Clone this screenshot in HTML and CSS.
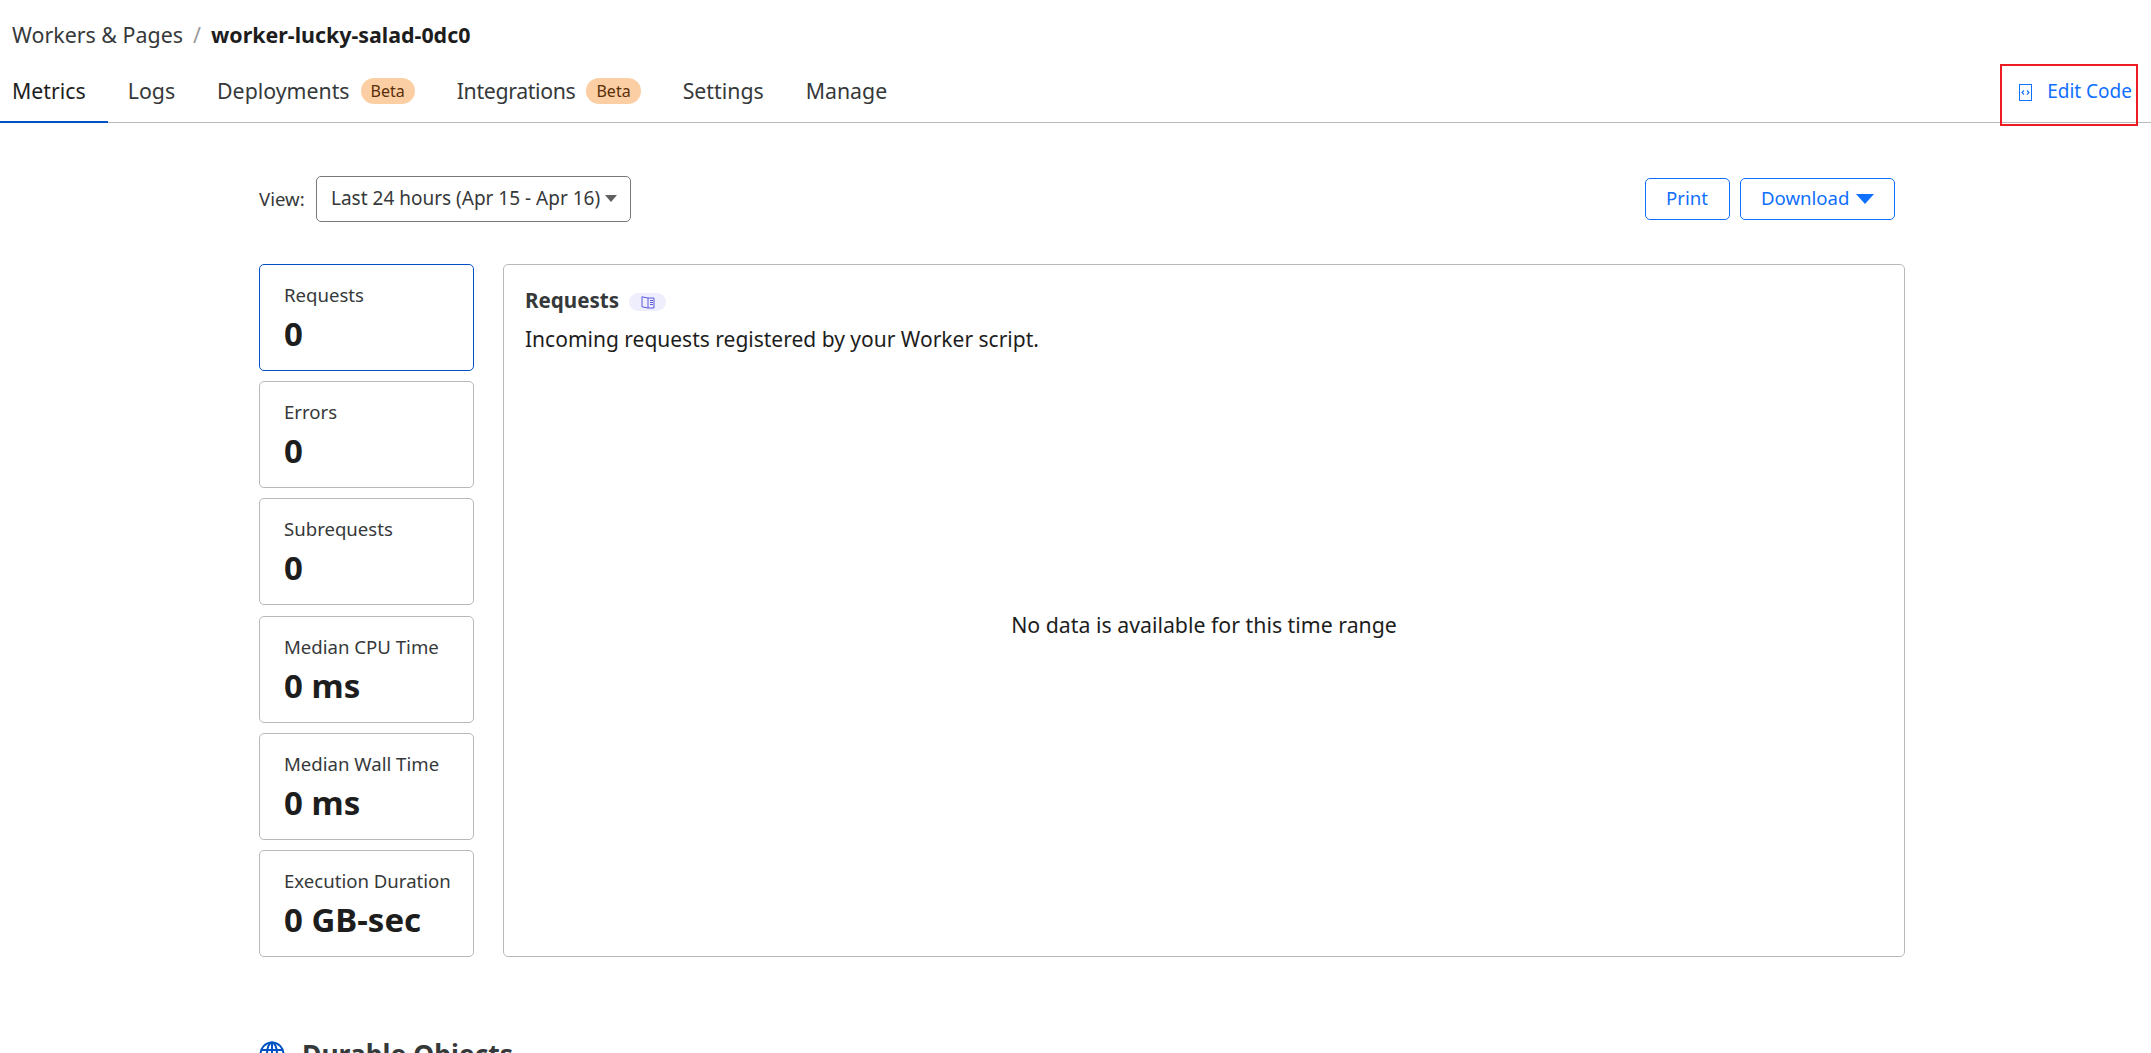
FILE: index.html
```html
<!DOCTYPE html>
<html lang="en">
<head>
<meta charset="utf-8">
<title>worker-lucky-salad-0dc0</title>
<link rel="stylesheet" href="styles.css">
</head>
<body>
<header class="top">
  <nav class="crumbs"><span>Workers &amp; Pages</span><span class="sep">/</span><strong>worker-lucky-salad-0dc0</strong></nav>
  <div class="tabbar">
    <a class="tab active">Metrics</a>
    <a class="tab">Logs</a>
    <a class="tab">Deployments<span class="beta">Beta</span></a>
    <a class="tab tight">Integrations<span class="beta">Beta</span></a>
    <a class="tab">Settings</a>
    <a class="tab">Manage</a>
    <a class="edit">
      <svg class="edit-ico" viewBox="0 0 13 17" width="13" height="17" fill="none" stroke="currentColor"><rect x="0.5" y="0.5" width="12" height="16"/><path d="M5 6.5 3 8.5l2 2M8 6.5l2 2-2 2" stroke-width="1.1"/></svg>
      Edit Code
    </a>
  </div>
</header>
<div class="annot"></div>
<main class="wrap">
  <div class="toolbar">
    <label class="view">View:</label>
    <div class="select">Last 24 hours (Apr 15 - Apr 16)<span class="caret"></span></div>
    <div class="actions">
      <button class="btn">Print</button>
      <button class="btn">Download<span class="caret-blue"></span></button>
    </div>
  </div>
  <div class="grid">
    <div class="cards">
      <div class="card selected"><div class="label">Requests</div><div class="value">0</div></div>
      <div class="card"><div class="label">Errors</div><div class="value">0</div></div>
      <div class="card"><div class="label">Subrequests</div><div class="value">0</div></div>
      <div class="card"><div class="label">Median CPU Time</div><div class="value">0 ms</div></div>
      <div class="card"><div class="label">Median Wall Time</div><div class="value">0 ms</div></div>
      <div class="card"><div class="label">Execution Duration</div><div class="value">0 GB-sec</div></div>
    </div>
    <section class="panel">
      <h3 class="panel-title">Requests<span class="doc"><svg viewBox="0 0 14 13" width="14" height="13" fill="none" stroke="#5b5be0"><path d="M7 2 1 .8v10l6 1.2zM7 2h6v10H7M9 4.5h3M9 6.5h3M9 8.5h3"/></svg></span></h3>
      <p class="panel-sub">Incoming requests registered by your Worker script.</p>
      <div class="empty">No data is available for this time range</div>
    </section>
  </div>
  <h2 class="section"><svg viewBox="0 0 26 26" width="26" height="26" fill="none" stroke="#0051c3" stroke-width="2"><circle cx="13" cy="13" r="11.5"/><ellipse cx="13" cy="13" rx="5" ry="11.5"/><path d="M13 1.5v23M2 9h22M2 17h22"/></svg>Durable Objects</h2>
</main>
</body>
</html>
```
FILE: styles.css
```css
html, body { margin: 0; height: 100%; overflow: hidden; background: #fff; }
body { font-family: "Noto Sans", "Open Sans", sans-serif; color: #1d1d1d; font-size: 18px; position: relative; }
.top { display: flex; flex-direction: column; }
.crumbs { display: flex; align-items: center; height: 35px; padding: 17px 0 0 12px; font-size: 21.4px; color: #36393a; line-height: 35px; }
.crumbs .sep { margin: 0 10px; color: #9a9a9a; }
.crumbs strong { color: #1d1d1d; font-weight: 700; }
.tabbar { display: flex; align-items: stretch; height: 71px; border-bottom: 1px solid #b9b9b9; box-sizing: border-box; }
.tab { display: flex; align-items: center; padding: 8px 22px 0 12px; font-size: 21.3px; color: #36393a; margin-right: 8px; border-bottom: 2px solid transparent; margin-bottom: -1px; }
.tab.tight { letter-spacing: -0.35px; }
.tab.active { border-bottom-color: #0051c3; color: #1d1d1d; }
.beta { display: inline-block; background: #fbcfa3; color: #5a2e0a; font-size: 16px; line-height: 26px; padding: 0 10px; border-radius: 13px; margin-left: 11px; letter-spacing: 0; }
.edit { margin-left: auto; display: flex; align-items: center; color: #0f6fff; font-size: 19px; padding: 8px 19px 0 0; }
.edit-ico { margin-right: 15px; margin-top: 2px; }
.annot { position: absolute; left: 2000px; top: 64px; width: 138px; height: 62px; box-sizing: border-box; border: 2px solid #ed1c24; pointer-events: none; }
.wrap { width: 1646px; margin: 53px 0 0 259px; }
.toolbar { display: flex; align-items: center; height: 46px; }
.view { font-size: 18.6px; width: 57px; flex: none; color: #36393a; margin-top: -2px; }
.select { display: flex; align-items: center; width: 315px; height: 46px; box-sizing: border-box; border: 1px solid #797979; border-radius: 5px; padding: 0 0 2px 14px; font-size: 19px; color: #36393a; white-space: nowrap; }
.caret { width: 0; height: 0; margin-left: 5px; border: 6px solid transparent; border-top: 7px solid #5f5f5f; border-bottom: 0; }
.actions { margin-left: auto; margin-right: 10px; display: flex; gap: 10px; }
.btn { height: 42px; padding: 0 20.5px 4px; background: #fff; border: 1.5px solid #0f6fff; border-radius: 5px; color: #0f6fff; font: 18.6px "Noto Sans", "Open Sans", sans-serif; display: flex; align-items: center; }
.caret-blue { width: 0; height: 0; margin: 4px 0 0 6px; border: 9px solid transparent; border-top: 10px solid #0f6fff; border-bottom: 0; }
.grid { display: flex; gap: 29px; height: 693px; margin-top: 42px; }
.cards { width: 215px; flex: none; display: flex; flex-direction: column; justify-content: space-between; }
.card { height: 107px; box-sizing: border-box; border: 1px solid #b9b9b9; border-radius: 5px; padding: 17px 24px 0; }
.card.selected { border-color: #0051c3; }
.label { font-size: 18.6px; line-height: 26px; color: #36393a; white-space: nowrap; }
.value { font-size: 33px; font-weight: 700; line-height: 44px; margin-top: 4px; color: #1d1d1d; white-space: nowrap; }
.panel { flex: 1; border: 1px solid #b9b9b9; border-radius: 5px; padding: 20px 21px; position: relative; display: flex; flex-direction: column; }
.panel-title { margin: 0; font-size: 20.6px; font-weight: 700; line-height: 30px; color: #36393a; display: flex; align-items: center; }
.doc { display: inline-flex; align-items: center; justify-content: center; width: 37px; height: 18px; background: #eeeefd; border-radius: 9px; margin-left: 10px; margin-top: 4px; }
.panel-sub { margin: 8px 0 0; font-size: 21px; line-height: 32px; color: #1d1d1d; }
.empty { flex: 1; display: flex; align-items: center; justify-content: center; font-size: 21.3px; padding-bottom: 43px; }
.section { display: flex; align-items: center; gap: 17px; margin: 77px 0 0; font-size: 26.5px; font-weight: 700; line-height: 40px; color: #36393a; }
```
